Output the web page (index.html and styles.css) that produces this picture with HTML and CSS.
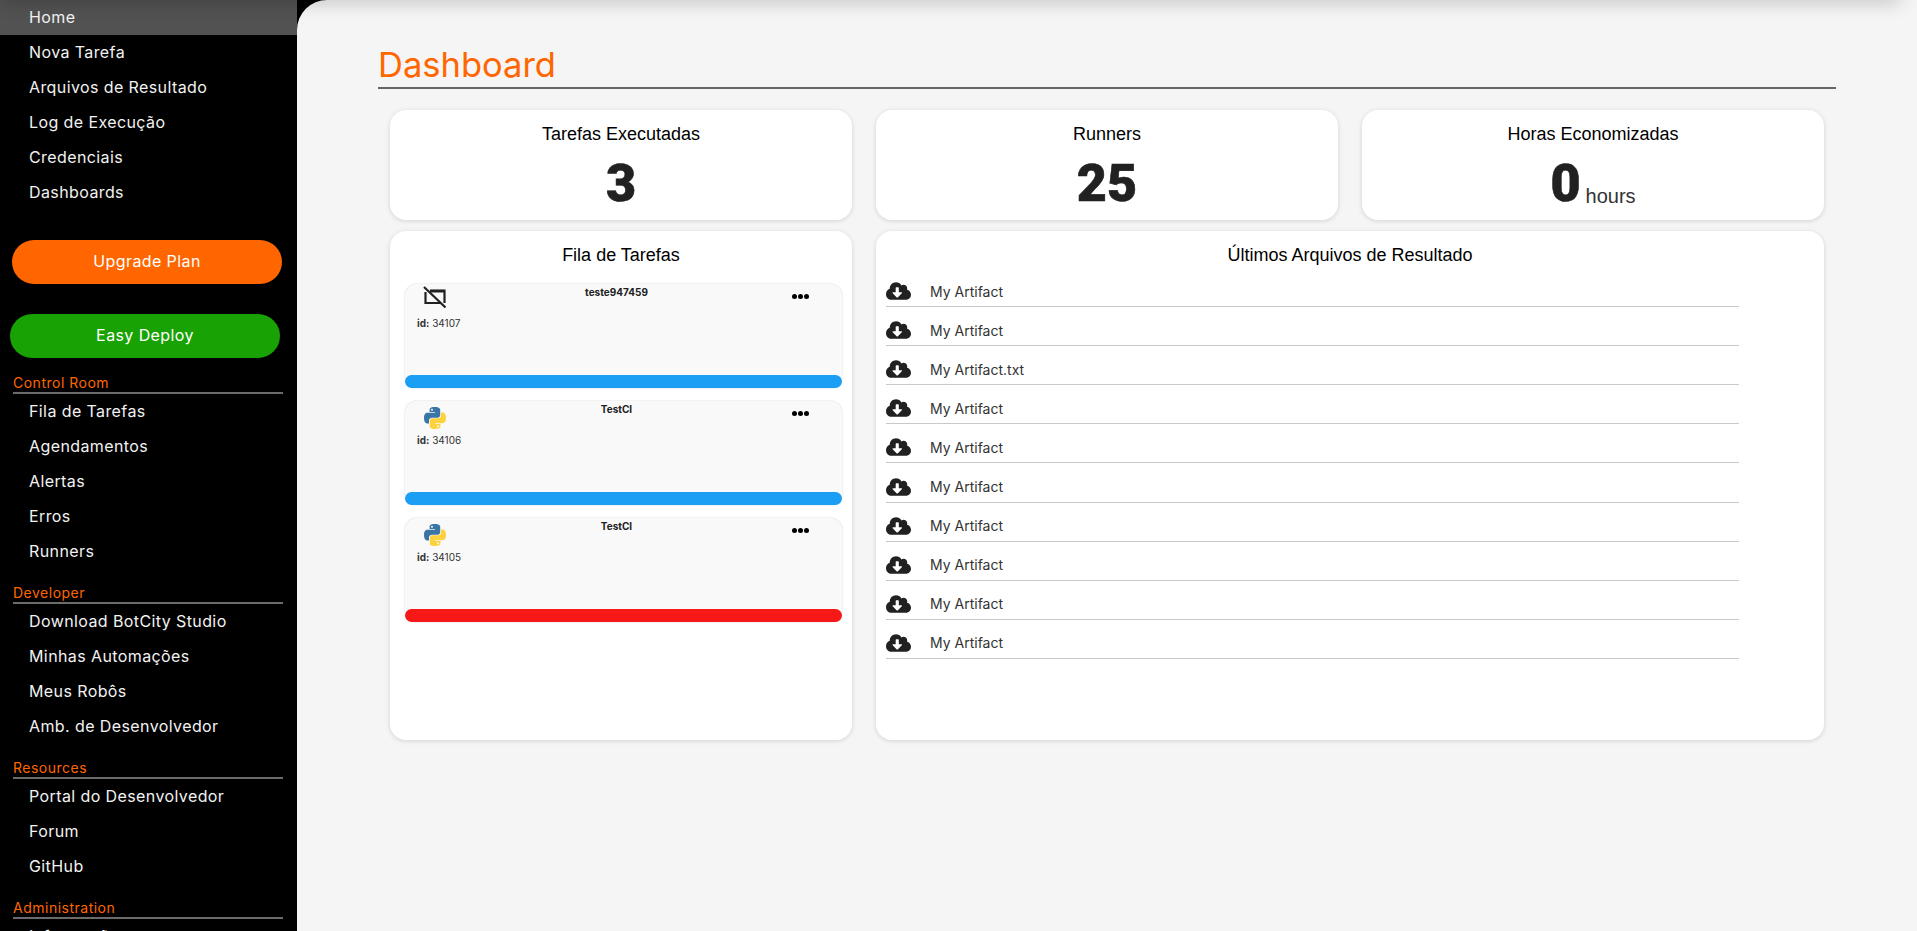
FILE: index.html
```html
<!DOCTYPE html>
<html lang="en">
<head>
    <meta charset="UTF-8">
    <meta name="viewport" content="width=device-width, initial-scale=1.0">
    <title>Dashboard</title>
    <link rel="stylesheet" href="styles.css">
</head>
<body>
    <div class="topShadow"></div>

    <!-- Left menu -->
    <nav class="sidebar">
        <a class="navItem active">Home</a>
        <a class="navItem">Nova Tarefa</a>
        <a class="navItem">Arquivos de Resultado</a>
        <a class="navItem">Log de Execução</a>
        <a class="navItem">Credenciais</a>
        <a class="navItem">Dashboards</a>

        <a class="pillButton upgrade">Upgrade Plan</a>
        <a class="pillButton deploy">Easy Deploy</a>

        <div class="navGroup">Control Room</div>
        <a class="navItem">Fila de Tarefas</a>
        <a class="navItem">Agendamentos</a>
        <a class="navItem">Alertas</a>
        <a class="navItem">Erros</a>
        <a class="navItem">Runners</a>

        <div class="navGroup">Developer</div>
        <a class="navItem">Download BotCity Studio</a>
        <a class="navItem">Minhas Automações</a>
        <a class="navItem">Meus Robôs</a>
        <a class="navItem">Amb. de Desenvolvedor</a>

        <div class="navGroup">Resources</div>
        <a class="navItem">Portal do Desenvolvedor</a>
        <a class="navItem">Forum</a>
        <a class="navItem">GitHub</a>

        <div class="navGroup">Administration</div>
        <a class="navItem">Informações</a>
    </nav>

    <main class="content">
        <h1 class="pageTitle">Dashboard</h1>

        <div class="statRow">
            <section class="card stat">
                <h2 class="cardTitle">Tarefas Executadas</h2>
                <p class="statValue">3</p>
            </section>
            <section class="card stat">
                <h2 class="cardTitle">Runners</h2>
                <p class="statValue">25</p>
            </section>
            <section class="card stat">
                <h2 class="cardTitle">Horas Economizadas</h2>
                <p class="statValue">0<span class="statUnit">hours</span></p>
            </section>
        </div>

        <div class="panelRow">
            <section class="card panel">
                <h2 class="cardTitle">Fila de Tarefas</h2>

                <div class="taskCard">
                    <div class="taskHead">
                        <svg class="taskIcon noDesktop" viewBox="0 0 24 24">
                            <path d="M7 4.500H21.500V17M2.500 6V17H17" fill="none" stroke="#212121" stroke-width="2.200"/>
                            <path d="M7 5.200H21" stroke="#212121" stroke-width="2.600"/>
                            <path d="M1 1L22.500 21.500" stroke="#212121" stroke-width="2.200"/>
                        </svg>
                        <span class="taskName">teste947459</span>
                        <span class="taskMenu"><i></i><i></i><i></i></span>
                    </div>
                    <p class="taskId"><b>id:</b> 34107</p>
                    <div class="taskBar blue"></div>
                </div>

                <div class="taskCard">
                    <div class="taskHead">
                        <svg class="taskIcon" viewBox="0 0 24 24">
                            <path d="M11.900 1C6.300 1 6.600 3.400 6.600 3.400V6h5.400v.8H4.500S1 6.400 1 12s3.100 5.400 3.100 5.400H6v-2.600s-.1-3.100 3-3.100h5.300s2.900 0 2.900-2.800V3.800S17.700 1 11.900 1zM9 2.700a1 1 0 1 1 0 2 1 1 0 0 1 0-2z" fill="#3a75a8"/>
                            <path d="M12.100 23c5.600 0 5.300-2.400 5.300-2.400V18H12v-.8h7.500s3.500.4 3.500-5.200-3.100-5.400-3.100-5.400H18v2.600s.1 3.100-3 3.100H9.700s-2.900 0-2.900 2.800v5.100S6.300 23 12.100 23zM15 21.300a1 1 0 1 1 0-2 1 1 0 0 1 0 2z" fill="#fdd23e"/>
                        </svg>
                        <span class="taskName">TestCI</span>
                        <span class="taskMenu"><i></i><i></i><i></i></span>
                    </div>
                    <p class="taskId"><b>id:</b> 34106</p>
                    <div class="taskBar blue"></div>
                </div>

                <div class="taskCard">
                    <div class="taskHead">
                        <svg class="taskIcon" viewBox="0 0 24 24">
                            <path d="M11.900 1C6.300 1 6.600 3.400 6.600 3.400V6h5.400v.8H4.500S1 6.400 1 12s3.100 5.400 3.100 5.400H6v-2.600s-.1-3.100 3-3.100h5.300s2.900 0 2.900-2.800V3.800S17.700 1 11.900 1zM9 2.700a1 1 0 1 1 0 2 1 1 0 0 1 0-2z" fill="#3a75a8"/>
                            <path d="M12.100 23c5.600 0 5.300-2.400 5.300-2.400V18H12v-.8h7.500s3.500.4 3.500-5.200-3.100-5.400-3.100-5.400H18v2.600s.1 3.100-3 3.100H9.700s-2.900 0-2.900 2.800v5.100S6.300 23 12.100 23zM15 21.300a1 1 0 1 1 0-2 1 1 0 0 1 0 2z" fill="#fdd23e"/>
                        </svg>
                        <span class="taskName">TestCI</span>
                        <span class="taskMenu"><i></i><i></i><i></i></span>
                    </div>
                    <p class="taskId"><b>id:</b> 34105</p>
                    <div class="taskBar red"></div>
                </div>
            </section>

            <section class="card panel wide">
                <h2 class="cardTitle">Últimos Arquivos de Resultado</h2>
                <ul class="artifactList">
                    <li><svg class="cloudIcon" viewBox="0 0 640 512"><use href="#cloud"/></svg>My Artifact</li>
                    <li><svg class="cloudIcon" viewBox="0 0 640 512"><use href="#cloud"/></svg>My Artifact</li>
                    <li><svg class="cloudIcon" viewBox="0 0 640 512"><use href="#cloud"/></svg>My Artifact.txt</li>
                    <li><svg class="cloudIcon" viewBox="0 0 640 512"><use href="#cloud"/></svg>My Artifact</li>
                    <li><svg class="cloudIcon" viewBox="0 0 640 512"><use href="#cloud"/></svg>My Artifact</li>
                    <li><svg class="cloudIcon" viewBox="0 0 640 512"><use href="#cloud"/></svg>My Artifact</li>
                    <li><svg class="cloudIcon" viewBox="0 0 640 512"><use href="#cloud"/></svg>My Artifact</li>
                    <li><svg class="cloudIcon" viewBox="0 0 640 512"><use href="#cloud"/></svg>My Artifact</li>
                    <li><svg class="cloudIcon" viewBox="0 0 640 512"><use href="#cloud"/></svg>My Artifact</li>
                    <li><svg class="cloudIcon" viewBox="0 0 640 512"><use href="#cloud"/></svg>My Artifact</li>
                </ul>
            </section>
        </div>
    </main>

    <svg class="iconDefs">
        <defs>
            <path id="cloud" fill="#212121" d="M537.600 226.600c4.100-10.700 6.400-22.400 6.400-34.600 0-53-43-96-96-96-19.700 0-38.100 6-53.300 16.200C367 64.200 315.300 32 256 32c-88.400 0-160 71.600-160 160 0 2.700.1 5.400.2 8.100C40.200 219.800 0 273.200 0 336c0 79.500 64.500 144 144 144h368c70.700 0 128-57.300 128-128 0-61.900-44-113.600-102.400-125.400zm-132.900 88.700L299.300 420.700c-6.200 6.200-16.400 6.200-22.600 0L171.300 315.300c-10.100-10.100-2.900-27.300 11.300-27.300H248V176c0-8.800 7.200-16 16-16h48c8.800 0 16 7.200 16 16v112h65.400c14.200 0 21.400 17.200 11.300 27.300z"/>
        </defs>
    </svg>
</body>
</html>
```

FILE: styles.css
```css
html, body {
    height: 100%;
}

body {
    margin: 0;
    display: flex;
    overflow: hidden;
    background-color: #000;
    font-family: "Inter", "Liberation Sans", sans-serif;
}

/* Shadow of the header that has scrolled off the top */
.topShadow {
    position: absolute;
    top: -12px;
    left: 0;
    right: 17px;
    height: 12px;
    z-index: 5;
    box-shadow: 0 0 20px rgba(0, 0, 0, 0.3);
}

/* Left menu */
.sidebar {
    flex: 0 0 297px;
    height: 100%;
    overflow: hidden;
    background-color: #000;
}

.navItem {
    display: block;
    height: 35px;
    line-height: 35px;
    padding-left: 29px;
    font-size: 16px;
    letter-spacing: 0.4px;
    color: #f2f2f2;
    white-space: nowrap;
}

.navItem.active {
    background-color: #525252;
}

.pillButton {
    display: block;
    width: 270px;
    height: 44px;
    line-height: 43px;
    border-radius: 22px;
    text-align: center;
    font-size: 16px;
    letter-spacing: 0.4px;
    color: #fff;
}

.upgrade {
    margin: 30px 0 0 12px;
    background-color: #ff6600;
}

.deploy {
    margin: 30px 0 14px 10px;
    background-color: #18a203;
}

.navGroup {
    height: 20px;
    line-height: 22px;
    margin: 13px 14px 0 13px;
    border-bottom: 2px solid #6b6b6b;
    font-size: 14px;
    letter-spacing: 0.5px;
    color: #ff6600;
}

/* Main area */
.content {
    flex: 1;
    height: 100%;
    box-sizing: border-box;
    padding: 41px 81px 0 81px;
    background-color: #f5f5f5;
    border-top-left-radius: 30px;
}

.pageTitle {
    margin: 0 0 21px;
    height: 46px;
    line-height: 47px;
    border-bottom: 2px solid #666;
    font-size: 34.500px;
    font-weight: 400;
    color: #ff6600;
}

.statRow,
.panelRow {
    display: flex;
    gap: 24px;
    padding: 0 12px;
}

.statRow {
    margin-bottom: 11px;
}

.card {
    box-sizing: border-box;
    background-color: #fff;
    border-radius: 16px;
    box-shadow: 0 1px 5px rgba(0, 0, 0, 0.14);
}

.stat {
    flex: 1;
    height: 110px;
    text-align: center;
}

.cardTitle {
    margin: 0;
    padding-top: 13px;
    line-height: 22px;
    font-family: "Liberation Sans", Arial, sans-serif;
    font-size: 18px;
    font-weight: 400;
    text-align: center;
    color: #000;
}

.statValue {
    margin: 10px 0 0;
    line-height: 58px;
    font-family: "Roboto", "Liberation Sans", sans-serif;
    font-size: 52px;
    font-weight: 900;
    color: #212121;
    -webkit-text-stroke: 0.6px #212121;
}

.statUnit {
    margin-left: 5px;
    line-height: 1;
    vertical-align: -2px;
    font-family: "Liberation Sans", Arial, sans-serif;
    font-size: 20px;
    font-weight: 400;
    color: #333;
    -webkit-text-stroke: 0;
}

.panelRow .panel {
    flex: 0 0 462px;
    height: 509px;
}

.panelRow .wide {
    flex: 1;
    padding: 0 10px;
}

/* Task queue cards */
.panel > .taskCard {
    margin: 13px 10px 0 15px;
}

.panel > .cardTitle + .taskCard {
    margin-top: 18px;
}

.taskCard {
    position: relative;
    box-sizing: border-box;
    height: 104px;
    padding: 0 0 0 12px;
    background-color: #f9f9f9;
    border-radius: 12px;
    box-shadow: 0 0 2px rgba(0, 0, 0, 0.2);
}

.taskHead {
    display: flex;
    align-items: flex-start;
    height: 25px;
}

.taskIcon {
    flex: 0 0 24px;
    width: 24px;
    height: 24px;
    margin: 4.500px 0 0 6px;
}

.taskIcon.noDesktop {
    margin-top: 2px;
}

.taskName {
    flex: 1;
    margin-top: 2px;
    padding-right: 6px;
    font-size: 10px;
    font-weight: 700;
    line-height: 12px;
    text-align: center;
    color: #212121;
}

.taskMenu {
    display: flex;
    gap: 1px;
    margin: 9.500px 33px 0 0;
}

.taskMenu i {
    width: 5px;
    height: 5px;
    border-radius: 50%;
    background-color: #000;
}

.taskId {
    margin: 8px 0 0;
    font-size: 10px;
    line-height: 13px;
    color: #333;
}

.taskBar {
    position: absolute;
    left: 0;
    right: 0;
    bottom: 0;
    height: 13px;
    border-radius: 7px;
}

.taskBar.blue {
    background-color: #1a9ff5;
}

.taskBar.red {
    background-color: #f71818;
}

/* Artifact list */
.artifactList {
    list-style: none;
    margin: 2px 0 0;
    padding: 0;
    width: 853px;
}

.artifactList li {
    display: flex;
    align-items: center;
    box-sizing: border-box;
    height: 39.100px;
    padding-top: 8px;
    border-bottom: 1px solid #c9c9c9;
    font-size: 14px;
    color: #333;
}

.cloudIcon {
    width: 25px;
    height: 20px;
    margin-right: 19px;
}

.iconDefs {
    position: absolute;
    width: 0;
    height: 0;
}
```
